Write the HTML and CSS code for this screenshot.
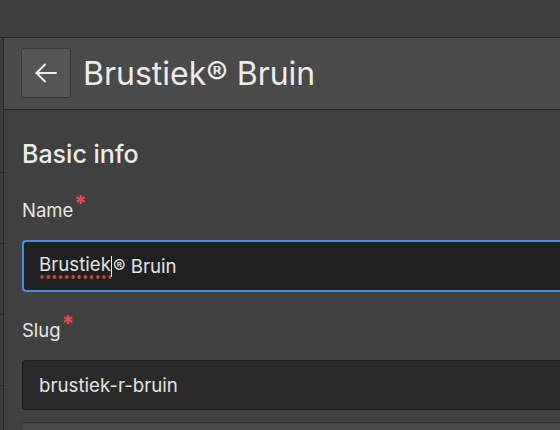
FILE: index.html
```html
<!DOCTYPE html>
<html>
<head>
<meta charset="utf-8">
<link rel="stylesheet" href="styles.css">
</head>
<body>
<div class="topbar"></div>
<div class="main">
  <div class="rail">
    <div class="rail-cell r1"></div>
    <div class="rail-cell r2"></div>
    <div class="rail-cell r2"></div>
    <div class="rail-cell r2"></div>
    <div class="rail-cell r3"></div>
  </div>
  <div class="page">
    <div class="header">
      <button class="back" aria-label="Back">
        <svg width="22" height="20" viewBox="0 0 22 20" fill="none" stroke="#ececec" stroke-width="2" stroke-linecap="round" stroke-linejoin="round"><path d="M21 10H1.5"/><path d="M10 1.5L1.5 10l8.5 8.5"/></svg>
      </button>
      <h1 class="title">Brustiek® Bruin</h1>
    </div>
    <div class="content">
      <h2 class="section">Basic info</h2>
      <div class="field">
        <label class="label">Name<span class="req">*</span></label>
        <div class="input focused"><span class="misspelled">Brustiek</span><span class="caret"></span>® Bruin</div>
      </div>
      <div class="field">
        <label class="label">Slug<span class="req">*</span></label>
        <div class="input">brustiek-r-bruin</div>
      </div>
      <div class="next"></div>
    </div>
  </div>
</div>
</body>
</html>
```

FILE: styles.css
```css
* { box-sizing: border-box; }
html, body { margin: 0; padding: 0; }
body {
  width: 560px;
  height: 430px;
  overflow: hidden;
  background: #414141;
  font-family: Inter, "Noto Sans", sans-serif;
  color: #ececec;
}
.topbar {
  height: 38px;
  background: #3f3f3f;
  border-bottom: 1px solid #262626;
}
.main {
  display: flex;
  height: 392px;
}
.rail {
  width: 4px;
  flex: none;
  background: #3d3d3d;
  border-right: 1px solid #262626;
  display: flex;
  flex-direction: column;
}
.rail-cell { border-bottom: 1px solid #2c2c2c; flex: none; }
.r1 { height: 135px; }
.r2 { height: 71px; }
.r3 { flex: 1; border-bottom: none; }
.page { flex: 1; min-width: 0; }
.header {
  height: 72px;
  background: #4a4a4a;
  border-bottom: 1px solid #262626;
  display: flex;
  align-items: center;
  padding-left: 17px;
  gap: 12px;
}
.back {
  width: 50px;
  height: 50px;
  margin-top: -1px;
  background: #555555;
  border: 1px solid #383838;
  border-radius: 3px;
  display: flex;
  align-items: center;
  justify-content: center;
  padding: 0;
}
.title {
  margin: 0;
  font-weight: 400;
  font-size: 32px;
  color: #ececec;
}
.content { padding: 29px 0 0 18px; }
.section {
  margin: 0 0 29px;
  font-size: 25px;
  line-height: 30px;
  font-weight: 500;
  color: #ececec;
}
.field { margin-bottom: 26px; }
.label {
  display: block;
  font-size: 18.5px;
  line-height: 24px;
  color: #e6e6e6;
  margin-bottom: 18px;
}
.req {
  color: #e5484d;
  position: relative;
  top: -6px;
  margin-left: 1px;
  font-size: 22px;
  font-weight: 700;
  line-height: 0;
}
.input {
  height: 50px;
  display: flex;
  align-items: center;
  padding-left: 16px;
  font-size: 18.7px;
  background: #2a2a2a;
  border: 1px solid #1e1e1e;
  border-right: none;
  border-radius: 4px 0 0 4px;
  color: #e2e2e2;
  white-space: pre;
}
.input.focused {
  height: 52px;
  background: #202020;
  border: 2px solid #4a8be3;
  border-right: none;
  padding-left: 15px;
}
.misspelled {
  background-image: radial-gradient(circle, #cc4636 1.6px, transparent 2px);
  background-size: 6.2px 4px;
  background-repeat: repeat-x;
  background-position: 0 100%;
  padding-bottom: 3px;
}
.caret {
  display: inline-block;
  width: 1px;
  height: 21px;
  background: #f0f0f0;
  vertical-align: middle;
  margin: 0 1px 0 0;
}
.next {
  height: 20px;
  background: #474747;
  border-top: 1px solid #2e2e2e;
  border-radius: 4px 0 0 0;
  margin-top: -14px;
}
```
